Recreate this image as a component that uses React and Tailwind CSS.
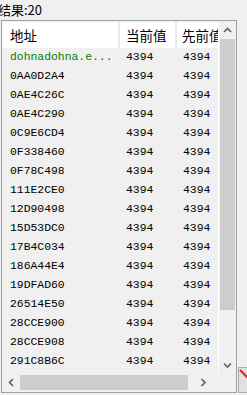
import React from "react";

const rows = [
  "dohnadohna.e...",
  "0AA0D2A4",
  "0AE4C26C",
  "0AE4C290",
  "0C9E6CD4",
  "0F338460",
  "0F78C498",
  "111E2CE0",
  "12D90498",
  "15D53DC0",
  "17B4C034",
  "186A44E4",
  "19DFAD60",
  "26514E50",
  "28CCE900",
  "28CCE908",
  "291C8B6C",
];

function Chevron({ dir }) {
  const paths = {
    up: "M1 5 L4.5 1.5 L8 5",
    down: "M1 1.5 L4.5 5 L8 1.5",
    left: "M5 1 L1.5 4.5 L5 8",
    right: "M1.5 1 L5 4.5 L1.5 8",
  };
  const vert = dir === "up" || dir === "down";
  return (
    <svg
      width={vert ? 9 : 7}
      height={vert ? 7 : 9}
      viewBox={vert ? "0 0 9 7" : "0 0 7 9"}
      className="block"
    >
      <path d={paths[dir]} fill="none" stroke="#606060" strokeWidth="1.6" />
    </svg>
  );
}

export default function App() {
  const cjk = { fontFamily: '"Noto Sans CJK SC", "Noto Sans", sans-serif' };
  const mono = { fontFamily: '"Liberation Mono", "Courier New", monospace' };
  return (
    <div className="relative w-[247px] h-[395px] bg-[#f0f0f0] overflow-hidden">
      <div
        className="h-[20px] ml-[-2px] text-[13px] leading-[19px] text-black"
        style={cjk}
      >
        结果:20
      </div>
      <div className="ml-[1px] w-[236px] h-[373px] border border-[#a0a0a0] pt-px pb-px pl-px flex flex-col bg-[#f0f0f0]">
        <div className="flex h-[354px]">
          <div className="w-[216px] flex flex-col overflow-hidden border-r border-white">
            <div
              className="flex h-[26px] bg-white text-[13.5px] text-black items-center shrink-0"
              style={cjk}
            >
              <div className="w-[117px] shrink-0 pl-[7px] h-full flex items-center border-r-2 border-[#e8e8e8]">
                地址
              </div>
              <div className="w-[57px] shrink-0 pl-[6px] h-full flex items-center border-r-2 border-[#e8e8e8]">
                当前值
              </div>
              <div className="w-[60px] shrink-0 pl-[5px] h-full flex items-center whitespace-nowrap">
                先前值
              </div>
            </div>
            <div className="flex flex-col text-[11.4px]" style={mono}>
              {rows.map((r, i) => (
                <div key={i} className="flex h-[19px] items-center whitespace-nowrap">
                  <div
                    className={
                      "w-[117px] shrink-0 pl-[7px] " +
                      (i === 0 ? "text-[#008000]" : "text-black")
                    }
                  >
                    {r}
                  </div>
                  <div className="w-[59px] shrink-0 pl-[6px] text-black">4394</div>
                  <div className="w-[40px] shrink-0 pl-[4px] text-black">4394</div>
                </div>
              ))}
            </div>
          </div>
          <div className="w-[17px] flex flex-col items-center bg-[#f0f0f0]">
            <div className="h-[17px] flex items-center justify-center">
              <Chevron dir="up" />
            </div>
            <div className="w-[15px] h-[271px] bg-[#cdcdcd]" />
            <div className="flex-1" />
            <div className="h-[17px] flex items-center justify-center">
              <Chevron dir="down" />
            </div>
          </div>
        </div>
        <div className="flex h-[17px]">
          <div className="w-[216px] flex items-center">
            <div className="w-[17px] flex items-center justify-center">
              <Chevron dir="left" />
            </div>
            <div className="w-[168px] h-[15px] bg-[#cdcdcd]" />
            <div className="flex-1 flex items-center justify-center">
              <Chevron dir="right" />
            </div>
          </div>
        </div>
      </div>
      <div className="absolute left-[238px] top-[367px] w-[20px] h-[26px] border border-[#adadad] bg-[#e1e1e1]">
        <svg width="20" height="26" className="block">
          <path d="M1 2 L10 11" stroke="#e02020" strokeWidth="2" />
        </svg>
      </div>
    </div>
  );
}
